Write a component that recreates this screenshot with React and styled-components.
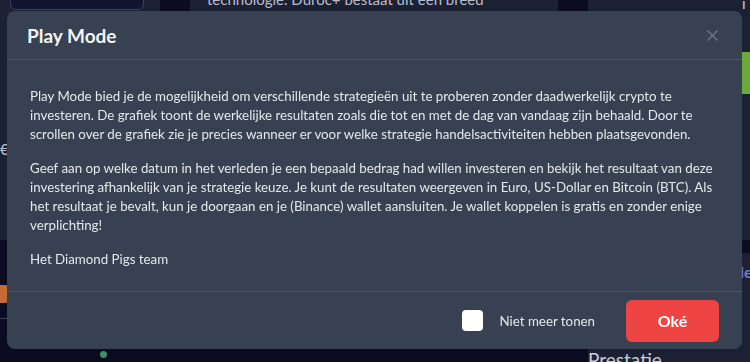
import React, { useState } from 'react';
import styled, { createGlobalStyle } from 'styled-components';

const GlobalStyle = createGlobalStyle`
  html, body {
    margin: 0;
    padding: 0;
    background: #0b0b22;
    font-family: Lato, "Noto Sans", sans-serif;
  }
  * { box-sizing: border-box; }
`;

const Page = styled.div`
  width: 750px;
  height: 362px;
  overflow: hidden;
  display: grid;
  grid-template-columns: 160px 368px 1fr;
  column-gap: 30px;
  background: #0b0b22;
`;

const Column = styled.div`
  display: flex;
  flex-direction: column;
  gap: ${(p) => p.$gap || 0}px;
`;

const Panel = styled.div`
  background: #1c2033;
  height: ${(p) => (p.$height ? `${p.$height}px` : 'auto')};
  flex: ${(p) => (p.$grow ? 1 : 'none')};
  display: flex;
  flex-direction: column;
`;

const MiniCard = styled.div`
  margin: -22px 0 0 10px;
  width: 134px;
  height: 32px;
  border: 1px solid #3b405c;
  border-radius: 6px;
  background: #111530;
`;

const Euro = styled.div`
  margin-top: 130px;
  color: #b8bccb;
  font-size: 15px;
`;

const OrangeChip = styled.div`
  margin-top: 45px;
  margin-left: -20px;
  width: 28px;
  height: 18px;
  border-radius: 3px;
  background: #c56a33;
`;

const Rule = styled.div`
  margin-top: 15px;
  height: 1px;
  background: #3a3f5c;
`;

const GreenDot = styled.div`
  margin: 32px 0 0 100px;
  width: 7px;
  height: 7px;
  border-radius: 50%;
  background: #3f8f66;
`;

const BgText = styled.p`
  margin: -11px 0 0 17px;
  color: #b8bccb;
  font-size: 15px;
  line-height: 20px;
  white-space: nowrap;
`;

const BgLabel = styled.div`
  margin: -6px 0 0 154px;
  color: #c9cdd8;
  font-size: 15px;
`;

const GreenBlock = styled.div`
  margin: 40px 0 0 150px;
  height: 42px;
  background: #6aaa3a;
`;

const BlueText = styled.div`
  margin: 9px 0 0 152px;
  color: #6b7bd6;
  font-size: 16px;
  font-weight: 700;
`;

const Prestatie = styled.div`
  margin-top: auto;
  margin-bottom: -9px;
  color: #c9cdd8;
  font-size: 19px;
`;

// Modal
const Overlay = styled.div`
  position: fixed;
  inset: 0;
`;

const Modal = styled.div`
  position: absolute;
  top: 11px;
  left: 7px;
  width: 735px;
  height: 338px;
  background: #374151;
  border-radius: 8px;
  display: flex;
  flex-direction: column;
  color: #e5e7eb;
`;

const Header = styled.div`
  height: 49px;
  flex: none;
  display: flex;
  align-items: center;
  justify-content: space-between;
  padding: 0 24px 0 20px;
  border-bottom: 1px solid #4b5563;
`;

const Title = styled.h3`
  margin: 0;
  font-size: 19px;
  font-weight: 700;
  color: #f3f4f6;
`;

const CloseButton = styled.button`
  border: 0;
  background: none;
  padding: 0;
  display: flex;
  color: #6b7280;
  cursor: pointer;
`;

const Body = styled.div`
  flex: 1;
  padding: 27px 23px 0 23px;
`;

const Paragraph = styled.p`
  margin: 0 0 15px;
  font-size: 13.3px;
  line-height: 19px;
  color: #e5e7eb;
`;

const Footer = styled.div`
  height: 58px;
  flex: none;
  display: flex;
  align-items: center;
  justify-content: flex-end;
  padding: 0 23px;
  border-top: 1px solid #4b5563;
`;

const CheckLabel = styled.label`
  display: flex;
  align-items: center;
  gap: 17px;
  margin-right: 31px;
  font-size: 13.3px;
  color: #e5e7eb;
  cursor: pointer;
`;

const Box = styled.span`
  width: 21px;
  height: 21px;
  border-radius: 4px;
  background: #ffffff;
  display: flex;
  align-items: center;
  justify-content: center;
`;

const OkButton = styled.button`
  width: 93px;
  height: 42px;
  border: 0;
  border-radius: 6px;
  background: #ef4444;
  color: #ffffff;
  font-family: inherit;
  font-size: 16px;
  font-weight: 700;
  cursor: pointer;
`;

export default function App() {
  const [checked, setChecked] = useState(false);

  return (
    <>
      <GlobalStyle />
      <Page>
        <Column>
          <Panel $height={240}>
            <MiniCard />
            <Euro>€</Euro>
          </Panel>
          <OrangeChip />
          <Rule />
          <GreenDot />
        </Column>
        <Column>
          <Panel $height={40}>
            <BgText>technologie. Duroc+ bestaat uit een breed</BgText>
          </Panel>
        </Column>
        <Column $gap={13}>
          <Panel $height={240}>
            <BgLabel>i</BgLabel>
            <GreenBlock />
          </Panel>
          <Panel $grow>
            <BlueText>le</BlueText>
            <Prestatie>Prestatie</Prestatie>
          </Panel>
        </Column>
      </Page>

      <Overlay>
        <Modal>
          <Header>
            <Title>Play Mode</Title>
            <CloseButton aria-label="Sluiten">
              <svg width="11" height="11" viewBox="0 0 11 11">
                <path d="M1 1 L10 10 M10 1 L1 10" stroke="currentColor" strokeWidth="1.6" strokeLinecap="round" />
              </svg>
            </CloseButton>
          </Header>
          <Body>
            <Paragraph>
              Play Mode bied je de mogelijkheid om verschillende strategieën uit te proberen zonder daadwerkelijk crypto te
              investeren. De grafiek toont de werkelijke resultaten zoals die tot en met de dag van vandaag zijn behaald. Door te
              scrollen over de grafiek zie je precies wanneer er voor welke strategie handelsactiviteiten hebben plaatsgevonden.
            </Paragraph>
            <Paragraph>
              Geef aan op welke datum in het verleden je een bepaald bedrag had willen investeren en bekijk het resultaat van deze
              investering afhankelijk van je strategie keuze. Je kunt de resultaten weergeven in Euro, US-Dollar en Bitcoin (BTC). Als
              het resultaat je bevalt, kun je doorgaan en je (Binance) wallet aansluiten. Je wallet koppelen is gratis en zonder enige
              verplichting!
            </Paragraph>
            <Paragraph>Het Diamond Pigs team</Paragraph>
          </Body>
          <Footer>
            <CheckLabel onClick={() => setChecked(!checked)}>
              <Box>
                {checked && (
                  <svg width="13" height="13" viewBox="0 0 13 13">
                    <path d="M2 7 L5 10 L11 3" stroke="#374151" strokeWidth="2" fill="none" />
                  </svg>
                )}
              </Box>
              Niet meer tonen
            </CheckLabel>
            <OkButton>Oké</OkButton>
          </Footer>
        </Modal>
      </Overlay>
    </>
  );
}
